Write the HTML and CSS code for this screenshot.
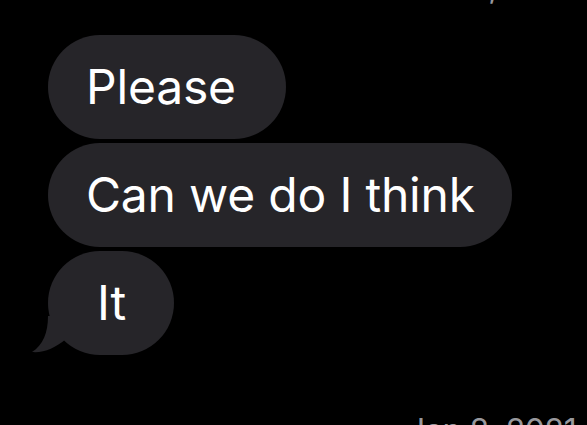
FILE: index.html
```html
<!DOCTYPE html>
<html>
<head>
<meta charset="utf-8">
<link rel="stylesheet" href="styles.css">
</head>
<body>
<div class="thread">
  <div class="stamp stamp-top">Jan 8, 2021</div>
  <div class="bubbles">
    <div class="bubble">Please </div>
    <div class="bubble">Can we do I think</div>
    <div class="bubble bubble-tail">It<svg class="tail" width="40" height="40" viewBox="0 0 40 40"><path d="M16 0 C16 17 11 29 0 36 C12 37 23 32 34 23 L34 0 Z" fill="#262529"/></svg></div>
  </div>
  <div class="stamp stamp-bottom">Jan 8, 2021</div>
</div>
</body>
</html>
```
FILE: styles.css
```css
html, body {
  margin: 0;
  padding: 0;
  background: #000;
  height: 100%;
  overflow: hidden;
}
.thread {
  display: flex;
  flex-direction: column;
  font-family: Inter, "Liberation Sans", sans-serif;
}
.stamp {
  font-size: 32px;
  line-height: 32px;
  height: 32px;
  color: #98989d;
  padding-left: 407px;
  letter-spacing: -0.4px;
  white-space: nowrap;
}
.stamp-top {
  margin-top: -29px;
}
.stamp-bottom {
  margin-top: 60px;
}
.bubbles {
  margin-top: 32px;
  padding-left: 48px;
  display: flex;
  flex-direction: column;
  align-items: flex-start;
  gap: 4px;
}
.bubble {
  box-sizing: border-box;
  min-width: 126px;
  text-align: center;
  background: #262529;
  color: #fff;
  font-size: 48px;
  line-height: 104px;
  height: 104px;
  padding: 0 37px 0 38px;
  border-radius: 52px;
  letter-spacing: -0.2px;
  white-space: pre;
}
.bubble-tail {
  position: relative;
}
.tail {
  position: absolute;
  left: -16px;
  bottom: -1px;
  display: block;
}
```
